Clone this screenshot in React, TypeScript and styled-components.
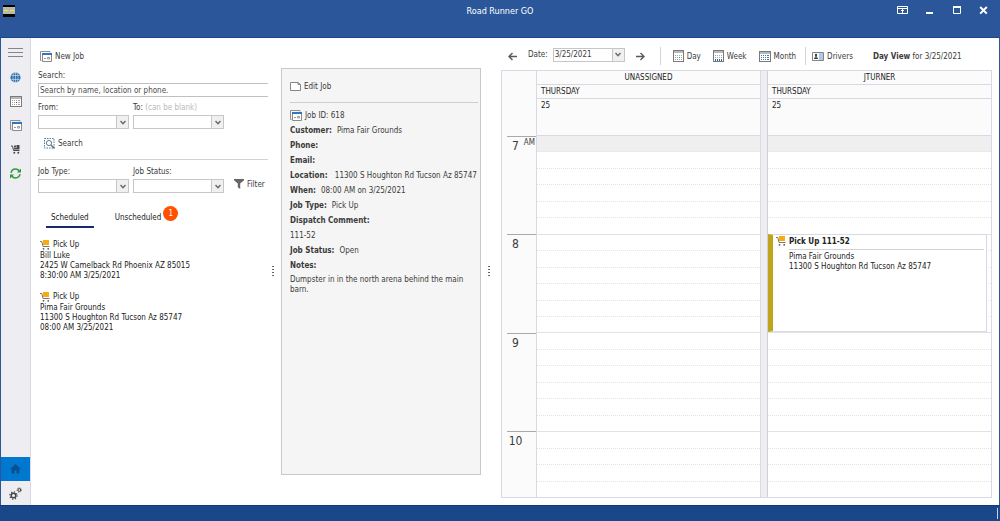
import React from "react";
import styled, { createGlobalStyle, css } from "styled-components";

const GlobalStyle = createGlobalStyle`
  *, *::before, *::after { box-sizing: border-box; }
  body { margin: 0; background: #fff; }
  body, button, input, select {
    font-family: "DejaVu Sans Condensed", "Noto Sans", "Liberation Sans", sans-serif;
    font-size: 8px;
    color: #3b3b3b;
  }
  button { background: none; border: 0; padding: 0; margin: 0; cursor: pointer; }
  svg { display: block; flex: none; }
`;

/* ---------- frame ---------- */

const Window = styled.div`
  display: grid;
  grid-template-rows: 38px 1fr 16px;
  min-height: 100vh;
`;

const TitleBar = styled.header`
  display: grid;
  grid-template-columns: 1fr auto 1fr;
  align-items: start;
  background: #2b579a;
  border-bottom: 1px solid #1d4788;
  color: #fff;
`;

const TitleIcon = styled.div`
  padding: 5px 3px;
`;

const Title = styled.h1`
  margin: 0;
  padding-top: 5px;
  font-size: 9px;
  line-height: 12px;
  font-weight: 400;
`;

const WindowControls = styled.div`
  display: flex;
  justify-content: flex-end;
  gap: 16px;
  padding: 5px 11px 0 0;
`;

const Body = styled.div`
  display: grid;
  grid-template-columns: 30px minmax(230px, 237fr) 13px minmax(190px, 200fr) 20px minmax(420px, 491fr);
  padding-right: 7px;
  border-left: 1px solid #2b579a;
  border-right: 1px solid #2b579a;
  background: #fff;
`;

const StatusBar = styled.footer`
  display: flex;
  justify-content: flex-end;
  padding: 2px;
  background: #19478a;
  border-top: 1px solid #0f3a7c;
`;

const StatusGrip = styled.span`
  width: 1px;
  height: 11px;
  background: #c5d3e8;
`;

/* ---------- side rail ---------- */

const Rail = styled.nav`
  display: flex;
  flex-direction: column;
  background: #eeedf2;
  border-right: 1px solid #d9d9e6;
`;

const RailButton = styled.button<{ $active?: boolean }>`
  display: flex;
  align-items: center;
  justify-content: center;
  height: 24px;
  ${(p) =>
    p.$active &&
    css`
      margin-top: auto;
      background: #0078d0;
    `}
`;

const RailMenu = styled(RailButton)`
  height: 27px;
`;

/* ---------- shared parts ---------- */

const IconButton = styled.button`
  display: flex;
  align-items: center;
  gap: 3px;
  height: 14px;
  white-space: nowrap;
`;

const Splitter = styled.div`
  display: flex;
  flex-direction: column;
  align-items: center;
  padding: 228px 4px 0 0;
  gap: 2px;
`;

const Dot = styled.i`
  width: 2px;
  height: 1px;
  background: #666;
`;

const Combo = styled.div`
  position: relative;
  display: flex;
  height: 14px;
  border: 1px solid #c6c6c6;
  background: #fff;

  input, select {
    flex: 1;
    min-width: 0;
    width: 100%;
    padding: 0 1px;
    border: 0;
    outline: 0;
    background: transparent;
    appearance: none;
  }
`;

const comboArrow = css`
  display: flex;
  align-items: center;
  justify-content: center;
  width: 12px;
  border-left: 1px solid #c6c6c6;
  background: #f0f0f0;
`;

const ComboButton = styled.button`
  ${comboArrow}
`;

const SelectArrow = styled.span`
  ${comboArrow}
  position: absolute;
  inset: 0 0 0 auto;
  pointer-events: none;
`;

/* ---------- job search ---------- */

const SearchPanel = styled.section`
  display: flex;
  flex-direction: column;
  padding: 11px 0 0 7px;
`;

const NewJobRow = styled.div`
  padding: 0 2px;
`;

const SearchField = styled.div`
  display: flex;
  flex-direction: column;
  gap: 2px;
  margin-top: 8px;
`;

const FieldLabel = styled.label`
  line-height: 10px;
`;

const Hint = styled.span`
  color: #b9b9b9;
`;

const SearchInput = styled.input`
  height: 14px;
  padding: 0 1px;
  border: 1px solid #c0c0c0;
  border-right: 0;
  outline: 0;
  &::placeholder { color: #4c4c4c; opacity: 1; }
`;

const FieldRow = styled.div`
  display: grid;
  grid-template-columns: 91fr 91fr 40fr;
  gap: 4px;
  margin-top: 6px;
`;

const Field = styled.div`
  display: flex;
  flex-direction: column;
  gap: 2px;
`;

const SearchAction = styled.div`
  padding: 7px 6px 0;
`;

const Divider = styled.hr`
  width: 100%;
  margin: 9px 0 1px;
  border: 0;
  border-top: 1px solid #d2d2d2;
`;

const FilterCell = styled.div`
  display: flex;
  align-items: flex-end;
  padding: 0 0 2px 6px;
`;

const Tabs = styled.div`
  display: flex;
  gap: 16px;
  margin: 15px 0 11px 8px;
`;

const Tab = styled.button<{ $active?: boolean }>`
  position: relative;
  height: 20px;
  padding: 0 5px;
  color: #222;
  border-bottom: 2px solid ${(p) => (p.$active ? "#1a2a6c" : "transparent")};
`;

const Badge = styled.span`
  position: absolute;
  top: -2px;
  right: -12px;
  width: 15px;
  height: 15px;
  border-radius: 50%;
  background: #ff5200;
  color: #fff;
  line-height: 15px;
  text-align: center;
`;

const JobList = styled.ul`
  display: flex;
  flex-direction: column;
  gap: 10px;
  margin: 0;
  padding: 0 0 0 2px;
  list-style: none;
`;

const JobItem = styled.li`
  line-height: 10px;
  color: #1a1a1a;
`;

const JobKind = styled.div`
  display: flex;
  align-items: center;
  gap: 3px;
  height: 12px;
`;

/* ---------- job details ---------- */

const DetailCard = styled.section`
  align-self: start;
  margin-top: 30px;
  min-height: calc(100vh - 114px);
  padding: 10px 2px 8px 8px;
  border: 1px solid #c9c9c9;
  background: #f5f5f5;
`;

const DetailRule = styled.hr`
  margin: 9px 0 4px;
  border: 0;
  border-top: 1px solid #cfcfcf;
`;

const JobId = styled.div`
  display: flex;
  align-items: center;
  gap: 3px;
  height: 16px;
`;

const Details = styled.dl`
  margin: 0;
  line-height: 15px;
`;

const Detail = styled.div<{ $stacked?: boolean }>`
  display: flex;
  flex-direction: ${(p) => (p.$stacked ? "column" : "row")};
  gap: ${(p) => (p.$stacked ? 0 : 5)}px;
  dt { font-weight: 700; white-space: nowrap; }
  dd { margin: 0; }
`;

const Notes = styled.dd`
  padding: 2px 0;
  line-height: 10px;
`;

/* ---------- schedule ---------- */

const Schedule = styled.section`
  display: flex;
  flex-direction: column;
  padding-bottom: 7px;
`;

const Toolbar = styled.div`
  display: flex;
  align-items: center;
  height: 32px;
  padding: 4px 0 0 7px;
`;

const DateNav = styled.div`
  display: flex;
  align-items: center;
  padding-right: 6px;
`;

const DateField = styled.div`
  display: flex;
  align-items: center;
  gap: 5px;
  margin: 0 11px;
  padding-bottom: 3px;
`;

const DateCombo = styled(Combo)`
  width: 72px;
`;

const Separator = styled.span`
  width: 1px;
  height: 18px;
  margin: 0 6px 0 9px;
  background: #d5d5d5;
`;

const ViewSwitch = styled.div`
  display: flex;
  gap: 12px;
  padding-left: 6px;
`;

const ViewCaption = styled.div`
  margin-left: 20px;
  white-space: nowrap;
`;

const Board = styled.div`
  flex: 1;
  display: grid;
  grid-template-columns: 35px 1fr 8px 1fr;
  border: 1px solid #d9d9e6;
`;

const Ruler = styled.div`
  display: flex;
  flex-direction: column;
  padding: 65px 0 0 5px;
  background: #fbfbfb;
  border-right: 1px solid #d9d9e6;
`;

const Hour = styled.div<{ $slots: number }>`
  flex: ${(p) => p.$slots} 0 0;
  display: flex;
  align-items: flex-start;
  justify-content: space-between;
  border-top: 1px solid #a9a9a9;
`;

const HourNumber = styled.span`
  width: 17px;
  padding-top: 2px;
  font-size: 12px;
  line-height: 14px;
  text-align: center;
`;

const Meridiem = styled.span`
  padding-right: 1px;
  line-height: 12px;
`;

const Gutter = styled.div`
  background: #eeedf2;
  border-left: 1px solid #d9d9e6;
  border-right: 1px solid #cfcfd4;
`;

const Column = styled.div`
  display: flex;
  flex-direction: column;
`;

const ColumnHead = styled.div<{ $center?: boolean }>`
  height: 14px;
  padding: 0 4px;
  border-bottom: 1px solid #d9d9e6;
  background: #fbfbfb;
  line-height: 14px;
  text-align: ${(p) => (p.$center ? "center" : "left")};
  color: #222;
`;

const DayNumber = styled(ColumnHead)`
  height: 37px;
`;

const Slots = styled.div`
  position: relative;
  flex: 1;
  display: flex;
  flex-direction: column;
`;

const Slot = styled.div<{ $off?: boolean; $hour?: boolean }>`
  flex: 1;
  border-bottom: 1px ${(p) => (p.$hour ? "solid #e2e2e2" : "dotted #e4e4e4")};
  background: ${(p) => (p.$off ? "#efefef" : "#fff")};
  &:last-of-type { border-bottom: 0; }
`;

const Appointment = styled.article`
  position: absolute;
  top: calc(100% * 6 / 22);
  left: 0;
  right: 4px;
  height: calc(100% * 6 / 22 - 1px);
  display: flex;
  gap: 3px;
  padding: 1px 2px 0 3px;
  border: 1px solid #d9d9e6;
  border-left: 5px solid #bfa51c;
  background: #fff;
  line-height: 10px;
  color: #222;
`;

const AppointmentText = styled.div`
  flex: 1;
`;

const AppointmentTitle = styled.h2`
  margin: 0 0 2px;
  padding-bottom: 2px;
  border-bottom: 1px solid #d2d2d2;
  font-size: 8px;
  line-height: 11px;
`;

/* ---------- icons ---------- */

const RoadIcon = () => (
  <svg width="12" height="12" viewBox="0 0 12 12">
    <path fill="#000" d="M0 0h12v12H0z" />
    <path fill="#b9b9ae" d="M0 2h12v7H0z" />
    <path stroke="#f2ee00" d="M1 5.5h4M7 5.5h4" />
  </svg>
);

const RibbonIcon = () => (
  <svg width="11" height="11" viewBox="0 0 11 11" fill="none" stroke="#fff">
    <path d="M.5 1.5h10v7H.5zM.5 3.5h10M5.500 8V4.500M4 6l1.500-1.500L7 6" />
  </svg>
);

const MinimizeIcon = () => (
  <svg width="11" height="11" viewBox="0 0 11 11">
    <path stroke="#fff" strokeWidth="2" d="M2 8h7" />
  </svg>
);

const MaximizeIcon = () => (
  <svg width="11" height="11" viewBox="0 0 11 11" fill="none" stroke="#fff">
    <path d="M2.500 1.500h7v7h-7z" />
    <path strokeWidth="2" d="M2 2h8" />
  </svg>
);

const CloseIcon = () => (
  <svg width="11" height="11" viewBox="0 0 11 11">
    <path stroke="#fff" strokeWidth="2" d="M2.200 2l6.600 6.600M8.800 2L2.200 8.600" />
  </svg>
);

const MenuIcon = () => (
  <svg width="15" height="10" viewBox="0 0 15 10" stroke="#858585">
    <path d="M0 1.500h15M0 5.500h15M0 9.500h15" />
  </svg>
);

const GlobeIcon = () => (
  <svg width="11" height="11" viewBox="0 0 11 11" fill="none">
    <circle cx="5.500" cy="5.500" r="5" fill="#2a6fb0" />
    <path stroke="#dfeaf5" strokeWidth=".6" d="M1.300 3.500h8.400M1.300 7.500h8.400M5.500.5v10" />
    <ellipse cx="5.500" cy="5.500" rx="2.500" ry="5" stroke="#dfeaf5" strokeWidth=".6" />
  </svg>
);

type CalendarKind = "plain" | "day" | "week" | "month";

const CalendarIcon = ({ kind }: { kind: CalendarKind }) => {
  const wide = kind === "plain" || kind === "month";
  const w = wide ? 12 : 11;
  const h = wide ? 11 : 12;
  const rows = wide ? [4, 6, 8] : [5, 7, 9];
  const cols = wide ? [2, 4, 6, 8, 9] : [2, 4, 6, 8];
  const color = (r: number, c: number) => {
    if (kind === "month") return "#3b78bd";
    if (kind === "week" && r === 2) return "#1f66bd";
    if (kind === "day" && r === 1 && c === 2) return "#1b9a5a";
    if (kind === "plain" && r === 1 && c === 2) return "#d01818";
    return "#a5a5a5";
  };
  return (
    <svg width={w} height={h} viewBox={`0 0 ${w} ${h}`} shapeRendering="crispEdges">
      <path stroke="#7a7a7a" fill="#fff" d={`M.5.5h${w - 1}v${h - 1}H.5z`} />
      <path fill="#b8b8b8" d={`M1 1h${w - 2}v1.500H1z`} />
      {rows.map((y, r) =>
        cols.map((x, c) => (
          <rect
            key={`${r}${c}`}
            x={x}
            y={y}
            width="1"
            height={kind === "week" && r === 2 ? 2 : 1}
            fill={color(r, c)}
          />
        ))
      )}
    </svg>
  );
};

const JobIcon = () => (
  <svg width="12" height="11" viewBox="0 0 12 11" fill="none">
    <path stroke="#8f8f8f" d="M1.500 9.500h-1v-9h9.500v1" />
    <path fill="#fff" stroke="#8a8a8a" d="M2.500 2.500h9v8h-9z" />
    <path fill="#2f76bd" d="M2 2h10v2H2z" />
    <path stroke="#9a9a9a" d="M4 7.500h2M7.500 6.500h2v1.500h-2z" />
  </svg>
);

const LiftIcon = () => (
  <svg width="9" height="9" viewBox="0 0 9 9">
    <path fill="none" stroke="#4a4a4a" d="M0 1h1.500L2.500 5.500H8.500" />
    <path fill="#4a4a4a" d="M3 .5h2v2H3zM5.500 0h3v4.500H3V3h2.500z" />
    <circle cx="3.300" cy="7.700" r="1" fill="#4a4a4a" />
    <circle cx="7.300" cy="7.700" r="1" fill="#4a4a4a" />
  </svg>
);

const RefreshIcon = () => (
  <svg width="11" height="11" viewBox="0 0 11 11" fill="none" stroke="#2f9a3c" strokeWidth="1.500">
    <path d="M1 4.800C1.500 2.500 3.300 1 5.500 1c1.600 0 2.900.7 3.800 2M10 6.200C9.500 8.500 7.700 10 5.500 10 3.900 10 2.600 9.300 1.700 8" />
    <path fill="#2f9a3c" stroke="none" d="M11 .5v4H7zM0 10.500v-4h4z" />
  </svg>
);

const HomeIcon = () => (
  <svg width="11" height="10" viewBox="0 0 11 10">
    <path fill="#0b4f93" d="M5.500 0L11 5.200H9.300V9.500H6.600V6.500H4.400v3H1.700V5.200H0z" />
  </svg>
);

const GearsIcon = () => (
  <svg width="13" height="13" viewBox="0 0 13 13" fill="none" stroke="#444">
    <circle cx="4.500" cy="8.500" r="2.300" strokeWidth="1.400" />
    <circle cx="4.500" cy="8.500" r="3.600" strokeWidth="1.300" strokeDasharray="1.200 1.627" />
    <circle cx="10.300" cy="3" r="1.400" strokeWidth="1" />
    <circle cx="10.300" cy="3" r="2.200" strokeWidth=".8" strokeDasharray=".9 .828" />
  </svg>
);

const ChevronIcon = () => (
  <svg width="6" height="5" viewBox="0 0 6 5">
    <path fill="none" stroke="#666" strokeWidth="1.400" d="M.5 1L3 3.700 5.500 1" />
  </svg>
);

const FindIcon = () => (
  <svg width="11" height="11" viewBox="0 0 11 11" fill="none">
    <path stroke="#3c83bd" strokeDasharray="1.500 1" d="M.5.5h9.500v9.500H.5z" />
    <circle cx="5" cy="5" r="2.600" stroke="#777" />
    <path stroke="#666" strokeWidth="1.300" d="M7 7l3.500 3.500" />
  </svg>
);

const FunnelIcon = () => (
  <svg width="10" height="10" viewBox="0 0 10 10">
    <path fill="#666" d="M0 0h10v1.200L6.200 4.500V10L3.800 8.300V4.500L0 1.200z" />
  </svg>
);

const CartIcon = () => (
  <svg width="10" height="10" viewBox="0 0 10 10" fill="none">
    <path fill="#fbab12" d="M3 0h6v5H3z" />
    <path stroke="#777" d="M0 1.500h1.800L3 6.500h6.500" />
    <circle cx="3.500" cy="8.800" r=".9" fill="#555" />
    <circle cx="8.200" cy="8.800" r=".9" fill="#555" />
  </svg>
);

const EditIcon = () => (
  <svg width="11" height="9" viewBox="0 0 11 9">
    <path fill="#fff" stroke="#858585" d="M.5.5h7.500l2.500 2v6H.5zM8 .5v2h2.500" />
  </svg>
);

const ArrowIcon = ({ forward }: { forward?: boolean }) => (
  <svg width="9" height="9" viewBox="0 0 9 9" fill="none" stroke="#5a5a5a" strokeWidth="1.400">
    <path d={forward ? "M0 4.500h8M4.500 1L8 4.500 4.500 8" : "M9 4.500H1M4.500 1L1 4.500 4.500 8"} />
  </svg>
);

const DriverIcon = () => (
  <svg width="12" height="9" viewBox="0 0 12 9" fill="none">
    <path fill="#fff" stroke="#858585" d="M.5.5h11v8H.5z" />
    <path fill="#a9cbe9" d="M7 1h4v7H7z" />
    <circle cx="4" cy="3" r="1.200" fill="#444" />
    <path fill="#444" d="M3.300 4h1.400v1.700H6V7H2V5.700h1.300z" />
  </svg>
);

/* ---------- data ---------- */

const jobs = [
  { who: "Bill Luke", where: "2425 W Camelback Rd Phoenix AZ 85015", when: "8:30:00 AM 3/25/2021" },
  { who: "Pima Fair Grounds", where: "11300 S Houghton Rd Tucson Az 85747", when: "08:00 AM 3/25/2021" },
];

const details = [
  { name: "Customer:", value: "Pima Fair Grounds" },
  { name: "Phone:", value: "" },
  { name: "Email:", value: "" },
  { name: "Location:", value: "\u00a011300 S Houghton Rd Tucson Az 85747" },
  { name: "When:", value: "08:00 AM on 3/25/2021" },
  { name: "Job Type:", value: "Pick Up" },
  { name: "Dispatch Comment:", value: "111-52", stacked: true },
  { name: "Job Status:", value: "Open" },
];

const hours = [
  { label: "7", slots: 6, meridiem: "AM" },
  { label: "8", slots: 6 },
  { label: "9", slots: 6 },
  { label: "10", slots: 4 },
];

const SLOT_COUNT = 22;

const DateBox = ({ id }: { id: string }) => (
  <Combo>
    <input id={id} type="text" />
    <ComboButton aria-label="Open calendar">
      <ChevronIcon />
    </ComboButton>
  </Combo>
);

const SelectBox = ({ id }: { id: string }) => (
  <Combo>
    <select id={id} />
    <SelectArrow>
      <ChevronIcon />
    </SelectArrow>
  </Combo>
);

const SplitHandle = () => (
  <Splitter>
    <Dot />
    <Dot />
    <Dot />
    <Dot />
  </Splitter>
);

const ResourceColumn = ({ name, children }: { name: string; children?: React.ReactNode }) => (
  <Column>
    <ColumnHead $center>{name}</ColumnHead>
    <ColumnHead>THURSDAY</ColumnHead>
    <DayNumber>25</DayNumber>
    <Slots>
      {Array.from({ length: SLOT_COUNT }, (_, i) => (
        <Slot key={i} $off={i === 0} $hour={i % 6 === 5} />
      ))}
      {children}
    </Slots>
  </Column>
);

export default function App() {
  return (
    <Window>
      <GlobalStyle />
      <TitleBar>
        <TitleIcon>
          <RoadIcon />
        </TitleIcon>
        <Title>Road Runner GO</Title>
        <WindowControls>
          <button aria-label="Ribbon options"><RibbonIcon /></button>
          <button aria-label="Minimize"><MinimizeIcon /></button>
          <button aria-label="Maximize"><MaximizeIcon /></button>
          <button aria-label="Close"><CloseIcon /></button>
        </WindowControls>
      </TitleBar>

      <Body>
        <Rail>
          <RailMenu aria-label="Menu"><MenuIcon /></RailMenu>
          <RailButton aria-label="Map"><GlobeIcon /></RailButton>
          <RailButton aria-label="Calendar"><CalendarIcon kind="plain" /></RailButton>
          <RailButton aria-label="Jobs"><JobIcon /></RailButton>
          <RailButton aria-label="Pick ups"><LiftIcon /></RailButton>
          <RailButton aria-label="Refresh"><RefreshIcon /></RailButton>
          <RailButton aria-label="Home" $active><HomeIcon /></RailButton>
          <RailButton aria-label="Settings"><GearsIcon /></RailButton>
        </Rail>

        <SearchPanel>
          <NewJobRow>
            <IconButton><JobIcon />New Job</IconButton>
          </NewJobRow>
          <SearchField>
            <FieldLabel htmlFor="search">Search:</FieldLabel>
            <SearchInput id="search" placeholder="Search by name, location or phone." />
          </SearchField>
          <FieldRow>
            <Field>
              <FieldLabel htmlFor="from">From:</FieldLabel>
              <DateBox id="from" />
            </Field>
            <Field>
              <FieldLabel htmlFor="to">To: <Hint>(can be blank)</Hint></FieldLabel>
              <DateBox id="to" />
            </Field>
          </FieldRow>
          <SearchAction>
            <IconButton><FindIcon />Search</IconButton>
          </SearchAction>
          <Divider />
          <FieldRow>
            <Field>
              <FieldLabel htmlFor="type">Job Type:</FieldLabel>
              <SelectBox id="type" />
            </Field>
            <Field>
              <FieldLabel htmlFor="status">Job Status:</FieldLabel>
              <SelectBox id="status" />
            </Field>
            <FilterCell>
              <IconButton><FunnelIcon />Filter</IconButton>
            </FilterCell>
          </FieldRow>
          <Tabs>
            <Tab $active>Scheduled</Tab>
            <Tab>Unscheduled<Badge>1</Badge></Tab>
          </Tabs>
          <JobList>
            {jobs.map((job) => (
              <JobItem key={job.who}>
                <JobKind><CartIcon />Pick Up</JobKind>
                <div>{job.who}</div>
                <div>{job.where}</div>
                <div>{job.when}</div>
              </JobItem>
            ))}
          </JobList>
        </SearchPanel>

        <SplitHandle />

        <DetailCard>
          <IconButton><EditIcon />Edit Job</IconButton>
          <DetailRule />
          <JobId><JobIcon />Job ID: 618</JobId>
          <Details>
            {details.map((d) => (
              <Detail key={d.name} $stacked={d.stacked}>
                <dt>{d.name}</dt>
                <dd>{d.value}</dd>
              </Detail>
            ))}
            <Detail $stacked>
              <dt>Notes:</dt>
              <Notes>Dumpster in in the north arena behind the main barn.</Notes>
            </Detail>
          </Details>
        </DetailCard>

        <SplitHandle />

        <Schedule>
          <Toolbar>
            <DateNav>
              <button aria-label="Previous day"><ArrowIcon /></button>
              <DateField>
                <label htmlFor="date">Date:</label>
                <DateCombo>
                  <input id="date" type="text" defaultValue="3/25/2021" />
                  <ComboButton aria-label="Open calendar"><ChevronIcon /></ComboButton>
                </DateCombo>
              </DateField>
              <button aria-label="Next day"><ArrowIcon forward /></button>
            </DateNav>
            <Separator />
            <ViewSwitch>
              <IconButton><CalendarIcon kind="day" />Day</IconButton>
              <IconButton><CalendarIcon kind="week" />Week</IconButton>
              <IconButton><CalendarIcon kind="month" />Month</IconButton>
            </ViewSwitch>
            <Separator />
            <IconButton><DriverIcon />Drivers</IconButton>
            <ViewCaption><b>Day View</b> for 3/25/2021</ViewCaption>
          </Toolbar>
          <Board>
            <Ruler>
              {hours.map((h) => (
                <Hour key={h.label} $slots={h.slots}>
                  <HourNumber>{h.label}</HourNumber>
                  {h.meridiem && <Meridiem>{h.meridiem}</Meridiem>}
                </Hour>
              ))}
            </Ruler>
            <ResourceColumn name="UNASSIGNED" />
            <Gutter />
            <ResourceColumn name="JTURNER">
              <Appointment>
                <CartIcon />
                <AppointmentText>
                  <AppointmentTitle>Pick Up 111-52</AppointmentTitle>
                  <div>Pima Fair Grounds</div>
                  <div>11300 S Houghton Rd Tucson Az 85747</div>
                </AppointmentText>
              </Appointment>
            </ResourceColumn>
          </Board>
        </Schedule>
      </Body>

      <StatusBar>
        <StatusGrip />
      </StatusBar>
    </Window>
  );
}
